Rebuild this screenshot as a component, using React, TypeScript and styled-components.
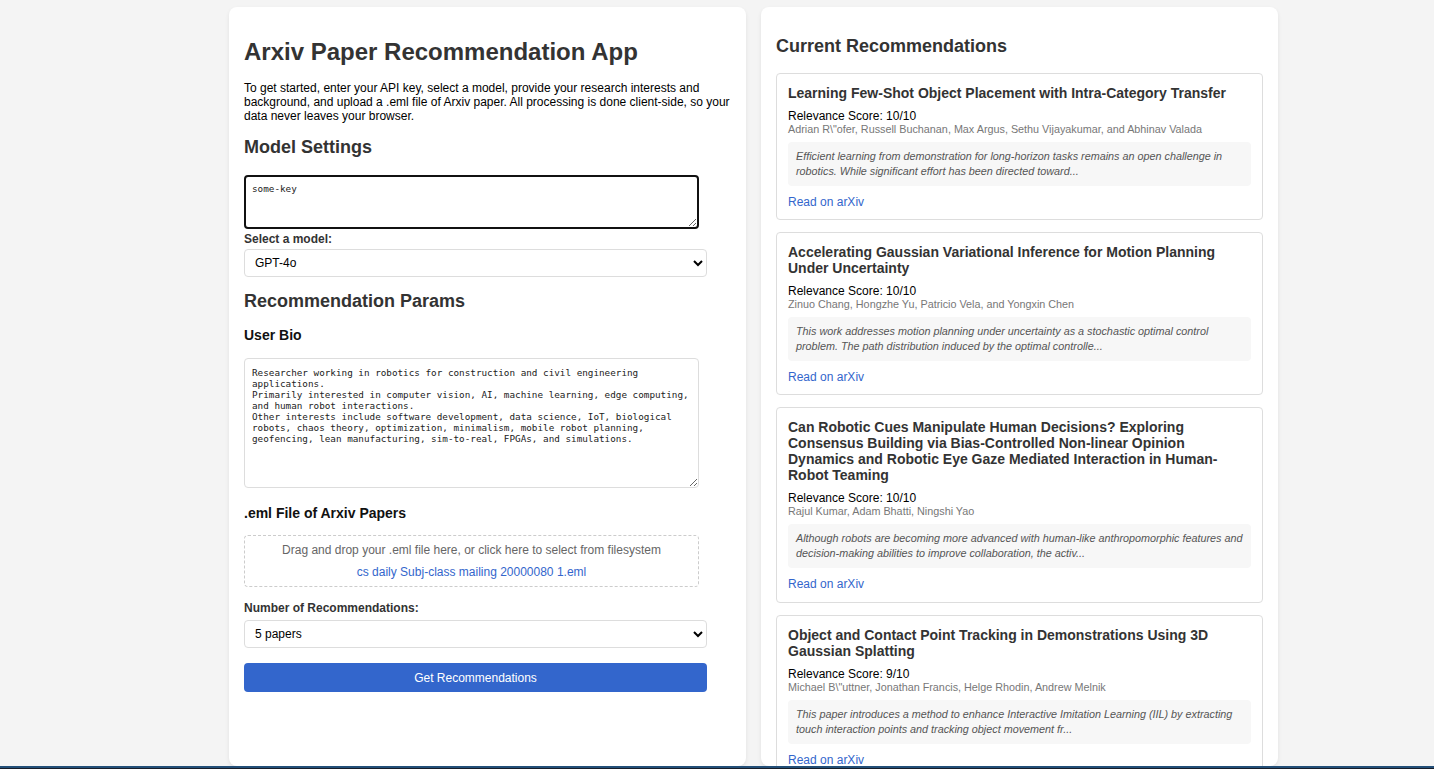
import React from "react";
import styled, { createGlobalStyle } from "styled-components";

const GlobalStyle = createGlobalStyle`
  html, body {
    margin: 0;
    padding: 0;
    background: #f4f4f4;
    font-family: "Liberation Sans", Arial, sans-serif;
  }
  * { box-sizing: border-box; }
`;

const Page = styled.div`
  height: 100vh;
  display: flex;
  flex-direction: column;
`;

const Main = styled.main`
  flex: 1;
  min-height: 0;
  overflow: hidden;
  display: flex;
  align-items: stretch;
  gap: 15px;
  padding: 7px 0 0 229px;
`;

const Footer = styled.div`
  height: 3px;
  flex-shrink: 0;
  border-top: 2px solid #234f78;
  background: #161d28;
`;

const Panel = styled.section`
  width: 517px;
  flex-shrink: 0;
  background: #fff;
  border-radius: 8px;
  box-shadow: 0 2px 4px rgba(0, 0, 0, 0.08);
  padding: 15px;
  display: flex;
  flex-direction: column;
  align-items: flex-start;
`;

const Title = styled.h1`
  margin: 16px 0 0;
  font-size: 24px;
  line-height: 28px;
  font-weight: 700;
  color: #333;
`;

const Intro = styled.p`
  margin: 15px 0 0;
  font-size: 12px;
  line-height: 14px;
  color: #000;
`;

const SectionHeading = styled.h2<{ $top: number }>`
  margin: ${(p) => p.$top}px 0 0;
  font-size: 18px;
  line-height: 21px;
  font-weight: 700;
  color: #333;
`;

const SubHeading = styled.h3<{ $top: number }>`
  margin: ${(p) => p.$top}px 0 0;
  font-size: 14px;
  line-height: 16px;
  font-weight: 700;
  color: #111;
`;

const TextArea = styled.textarea<{ $top: number; $height: number; $focused?: boolean }>`
  display: block;
  margin-top: ${(p) => p.$top}px;
  width: 455px;
  height: ${(p) => p.$height}px;
  padding: ${(p) => (p.$focused ? "6px 6px" : "8px 7px")};
  border: ${(p) => (p.$focused ? "2px solid #111" : "1px solid #ddd")};
  border-radius: 4px;
  font-family: "DejaVu Sans Mono", monospace;
  font-size: 9.3px;
  line-height: 11px;
  color: #222;
  background: #fff;
  resize: vertical;
  outline: none;
`;

const Label = styled.label<{ $top: number }>`
  display: block;
  margin-top: ${(p) => p.$top}px;
  font-size: 12px;
  line-height: 14px;
  font-weight: 700;
  color: #333;
`;

const Select = styled.select<{ $top: number }>`
  display: block;
  margin-top: ${(p) => p.$top}px;
  width: 463px;
  height: 28px;
  padding: 0 6px;
  border: 1px solid #ddd;
  border-radius: 4px;
  background: #fff;
  font-family: "Liberation Sans", Arial, sans-serif;
  font-size: 12px;
  color: #000;
`;

const DropZone = styled.div`
  margin-top: 14px;
  width: 455px;
  padding: 7px 10px;
  border: 1px dashed #ccc;
  border-radius: 4px;
  display: flex;
  flex-direction: column;
  align-items: center;
  gap: 8px;
  font-size: 12px;
  line-height: 14px;
`;

const DropHint = styled.span`
  color: #666;
`;

const FileName = styled.span`
  color: #3366cc;
`;

const Button = styled.button`
  margin-top: 15px;
  width: 463px;
  height: 29px;
  border: none;
  border-radius: 4px;
  background: #3366cc;
  color: #fff;
  font-family: "Liberation Sans", Arial, sans-serif;
  font-size: 12px;
  cursor: pointer;
`;

const CardList = styled.div`
  margin-top: 16px;
  width: 100%;
  display: flex;
  flex-direction: column;
  gap: 12px;
`;

const Card = styled.article`
  border: 1px solid #ddd;
  border-radius: 4px;
  padding: 11px 11px 10.4px;
  display: flex;
  flex-direction: column;
`;

const CardTitle = styled.h4`
  margin: 0;
  font-size: 14px;
  line-height: 16px;
  font-weight: 700;
  color: #333;
`;

const Score = styled.div`
  margin-top: 8px;
  font-size: 12px;
  line-height: 14px;
  color: #000;
`;

const Authors = styled.div`
  font-size: 10.8px;
  line-height: 13px;
  color: #777;
`;

const Abstract = styled.p`
  margin: 6px 0 0;
  padding: 7px 8px;
  background: #f7f7f7;
  border-radius: 4px;
  font-size: 10.8px;
  line-height: 15px;
  font-style: italic;
  color: #555;
`;

const ReadLink = styled.a`
  margin-top: 9px;
  font-size: 12px;
  line-height: 14px;
  color: #3366cc;
  text-decoration: none;
  align-self: flex-start;
`;

const bio = `Researcher working in robotics for construction and civil engineering applications.
Primarily interested in computer vision, AI, machine learning, edge computing, and human robot interactions.
Other interests include software development, data science, IoT, biological robots, chaos theory, optimization, minimalism, mobile robot planning, geofencing, lean manufacturing, sim-to-real, FPGAs, and simulations.`;

const papers = [
  {
    title: "Learning Few-Shot Object Placement with Intra-Category Transfer",
    score: "10/10",
    authors: "Adrian R\\\"ofer, Russell Buchanan, Max Argus, Sethu Vijayakumar, and Abhinav Valada",
    abstract:
      "Efficient learning from demonstration for long-horizon tasks remains an open challenge in robotics. While significant effort has been directed toward...",
  },
  {
    title: "Accelerating Gaussian Variational Inference for Motion Planning Under Uncertainty",
    score: "10/10",
    authors: "Zinuo Chang, Hongzhe Yu, Patricio Vela, and Yongxin Chen",
    abstract:
      "This work addresses motion planning under uncertainty as a stochastic optimal control problem. The path distribution induced by the optimal controlle...",
  },
  {
    title:
      "Can Robotic Cues Manipulate Human Decisions? Exploring Consensus Building via Bias-Controlled Non-linear Opinion Dynamics and Robotic Eye Gaze Mediated Interaction in Human-Robot Teaming",
    score: "10/10",
    authors: "Rajul Kumar, Adam Bhatti, Ningshi Yao",
    abstract:
      "Although robots are becoming more advanced with human-like anthropomorphic features and decision-making abilities to improve collaboration, the activ...",
  },
  {
    title: "Object and Contact Point Tracking in Demonstrations Using 3D Gaussian Splatting",
    score: "9/10",
    authors: "Michael B\\\"uttner, Jonathan Francis, Helge Rhodin, Andrew Melnik",
    abstract:
      "This paper introduces a method to enhance Interactive Imitation Learning (IIL) by extracting touch interaction points and tracking object movement fr...",
  },
  {
    title: "Sim-to-Real Transfer of Construction Robot Policies with Domain Randomization",
    score: "9/10",
    authors: "Jane Doe, John Smith",
    abstract:
      "We study the transfer of learned manipulation policies for construction tasks from simulation to real-world deployment...",
  },
];

export default function App() {
  return (
    <>
      <GlobalStyle />
      <Page>
        <Main>
          <Panel>
            <Title>Arxiv Paper Recommendation App</Title>
            <Intro>
              To get started, enter your API key, select a model, provide your research interests and
              background, and upload a .eml file of Arxiv paper. All processing is done client-side, so your
              data never leaves your browser.
            </Intro>
            <SectionHeading $top={13.5}>Model Settings</SectionHeading>
            <TextArea $top={17.5} $height={54} $focused defaultValue="some-key" spellCheck={false} />
            <Label $top={3} htmlFor="model">Select a model:</Label>
            <Select $top={3} id="model" defaultValue="gpt-4o">
              <option value="gpt-4o">GPT-4o</option>
              <option value="gpt-4o-mini">GPT-4o mini</option>
            </Select>
            <SectionHeading $top={13.5}>Recommendation Params</SectionHeading>
            <SubHeading $top={15.5}>User Bio</SubHeading>
            <TextArea $top={15} $height={130} defaultValue={bio} />
            <SubHeading $top={17}>.eml File of Arxiv Papers</SubHeading>
            <DropZone>
              <DropHint>Drag and drop your .eml file here, or click here to select from filesystem</DropHint>
              <FileName>cs daily Subj-class mailing 20000080 1.eml</FileName>
            </DropZone>
            <Label $top={14} htmlFor="count">Number of Recommendations:</Label>
            <Select $top={5} id="count" defaultValue="5">
              <option value="3">3 papers</option>
              <option value="5">5 papers</option>
              <option value="10">10 papers</option>
            </Select>
            <Button>Get Recommendations</Button>
          </Panel>
          <Panel>
            <SectionHeading $top={13.5}>Current Recommendations</SectionHeading>
            <CardList>
              {papers.map((p) => (
                <Card key={p.title}>
                  <CardTitle>{p.title}</CardTitle>
                  <Score>Relevance Score: {p.score}</Score>
                  <Authors>{p.authors}</Authors>
                  <Abstract>{p.abstract}</Abstract>
                  <ReadLink href="#">Read on arXiv</ReadLink>
                </Card>
              ))}
            </CardList>
          </Panel>
        </Main>
        <Footer />
      </Page>
    </>
  );
}
